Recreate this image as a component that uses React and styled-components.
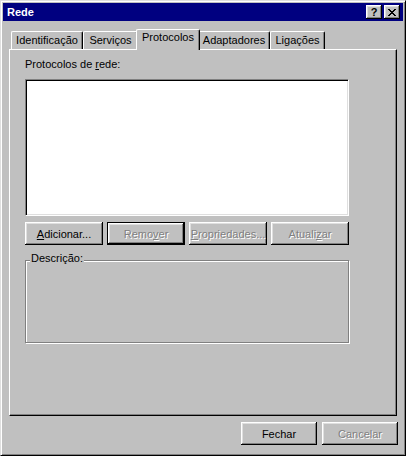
import React from "react";
import styled, { createGlobalStyle, css } from "styled-components";

const GlobalStyle = createGlobalStyle`
  html, body {
    margin: 0;
    padding: 0;
    background: #c0c0c0;
  }
  body {
    font-family: "Liberation Sans", Arial, sans-serif;
    font-size: 11px;
  }
`;

const raised = css`
  box-shadow: inset -1px -1px #000, inset 1px 1px #fff,
    inset -2px -2px #808080, inset 2px 2px #dfdfdf;
`;

const Window = styled.div`
  width: 406px;
  height: 456px;
  box-sizing: border-box;
  border: 1px solid;
  border-color: #dfdfdf #000 #000 #dfdfdf;
  box-shadow: inset 1px 1px #fff, inset -1px -1px #808080;
  padding: 2px;
  background: #c0c0c0;
  display: flex;
  flex-direction: column;
`;

const TitleBar = styled.div`
  height: 18px;
  background: #000080;
  display: flex;
  align-items: center;
  padding: 0 3px 0 4px;
  color: #fff;
  font-weight: bold;
  font-size: 11px;
`;

const Title = styled.div`
  flex: 1;
`;

const TitleButton = styled.button`
  width: 16px;
  height: 14px;
  margin-left: 2px;
  padding: 0;
  border: none;
  background: #c0c0c0;
  ${raised};
  display: flex;
  align-items: center;
  justify-content: center;
  font-family: "Liberation Sans", Arial, sans-serif;
  font-weight: bold;
  font-size: 11px;
  color: #000;
`;

const Body = styled.div`
  flex: 1;
  padding: 8px 6px 0;
  display: flex;
  flex-direction: column;
`;

const TabRow = styled.div`
  display: flex;
  align-items: flex-end;
  height: 20px;
  padding-left: 2px;
`;

const Tab = styled.div`
  width: ${(p) => p.$w}px;
  height: 18px;
  box-sizing: border-box;
  border-left: 1px solid #fff;
  border-top: 1px solid #fff;
  border-right: 1px solid #000;
  border-radius: 2px 2px 0 0;
  box-shadow: inset -1px 0 #808080;
  background: #c0c0c0;
  padding-top: 2px;
  line-height: 13px;
  text-align: center;
  white-space: nowrap;
  color: #000;
  ${(p) =>
    p.$active &&
    css`
      height: 21px;
      margin: 0 -2px -1px;
      padding-top: 1px;
      position: relative;
      z-index: 1;
    `}
`;

const Panel = styled.div`
  width: 388px;
  height: 367px;
  box-sizing: border-box;
  border: 1px solid;
  border-color: #fff #000 #000 #fff;
  box-shadow: inset -1px -1px #808080;
  padding: 8px 0 0 15px;
`;

const Label = styled.div`
  line-height: 13px;
  height: 13px;
  color: #000;
`;

const ListBox = styled.div`
  margin-top: 8px;
  width: 324px;
  height: 137px;
  box-sizing: border-box;
  background: #fff;
  border: 1px solid;
  border-color: #808080 #fff #fff #808080;
  box-shadow: inset 1px 1px #000, inset -1px -1px #dfdfdf;
`;

const ButtonRow = styled.div`
  margin-top: 6px;
  width: 324px;
  display: grid;
  grid-template-columns: repeat(4, 1fr);
  gap: 4px;
`;

const Button = styled.button`
  height: 23px;
  width: ${(p) => (p.$w ? `${p.$w}px` : "auto")};
  box-sizing: border-box;
  padding: 0;
  border: none;
  background: #c0c0c0;
  ${raised};
  font-family: "Liberation Sans", Arial, sans-serif;
  font-size: 11px;
  color: #000;
  ${(p) =>
    p.$default &&
    css`
      border: 1px solid #000;
    `}
  ${(p) =>
    p.$disabled &&
    css`
      color: #808080;
      text-shadow: 1px 1px 0 #fff;
    `}
`;

const GroupBox = styled.fieldset`
  margin: 7px 0 0;
  width: 324px;
  box-sizing: border-box;
  border: 1px solid #808080;
  box-shadow: inset 1px 1px #fff, 1px 1px #fff;
  padding: 0 4px;
`;

const Legend = styled.legend`
  padding: 0 1px 3px;
  line-height: 13px;
  background: #c0c0c0;
  color: #000;
`;

const GroupInner = styled.div`
  height: 74px;
`;

const Footer = styled.div`
  margin-top: 6px;
  margin-right: -1px;
  display: flex;
  justify-content: flex-end;
  gap: 5px;
`;

const CloseGlyph = () => (
  <svg width="8" height="7" viewBox="0 0 8 7" shapeRendering="crispEdges">
    <path
      d="M0 0h2v1H0zM6 0h2v1H6zM1 1h2v1H1zM5 1h2v1H5zM2 2h4v1H2zM3 3h2v1H3zM2 4h4v1H2zM1 5h2v1H1zM5 5h2v1H5zM0 6h2v1H0zM6 6h2v1H6z"
      fill="#000"
    />
  </svg>
);

const tabs = [
  { name: "Identificação", w: 72 },
  { name: "Serviços", w: 55 },
  { name: "Protocolos", w: 64, active: true },
  { name: "Adaptadores", w: 72 },
  { name: "Ligações", w: 55 },
];

export default function App() {
  return (
    <>
      <GlobalStyle />
      <Window>
        <TitleBar>
          <Title>Rede</Title>
          <TitleButton>?</TitleButton>
          <TitleButton>
            <CloseGlyph />
          </TitleButton>
        </TitleBar>
        <Body>
          <TabRow>
            {tabs.map((t) => (
              <Tab key={t.name} $w={t.w} $active={t.active}>
                {t.name}
              </Tab>
            ))}
          </TabRow>
          <Panel>
            <Label>
              Protocolos de <u>r</u>ede:
            </Label>
            <ListBox />
            <ButtonRow>
              <Button>
                <u>A</u>dicionar...
              </Button>
              <Button $default $disabled>
                Remo<u>v</u>er
              </Button>
              <Button $disabled>
                <u>P</u>ropriedades...
              </Button>
              <Button $disabled>
                Atuali<u>z</u>ar
              </Button>
            </ButtonRow>
            <GroupBox>
              <Legend>Descrição:</Legend>
              <GroupInner />
            </GroupBox>
          </Panel>
          <Footer>
            <Button $w={76}>Fechar</Button>
            <Button $w={76} $disabled>
              Cancelar
            </Button>
          </Footer>
        </Body>
      </Window>
    </>
  );
}
